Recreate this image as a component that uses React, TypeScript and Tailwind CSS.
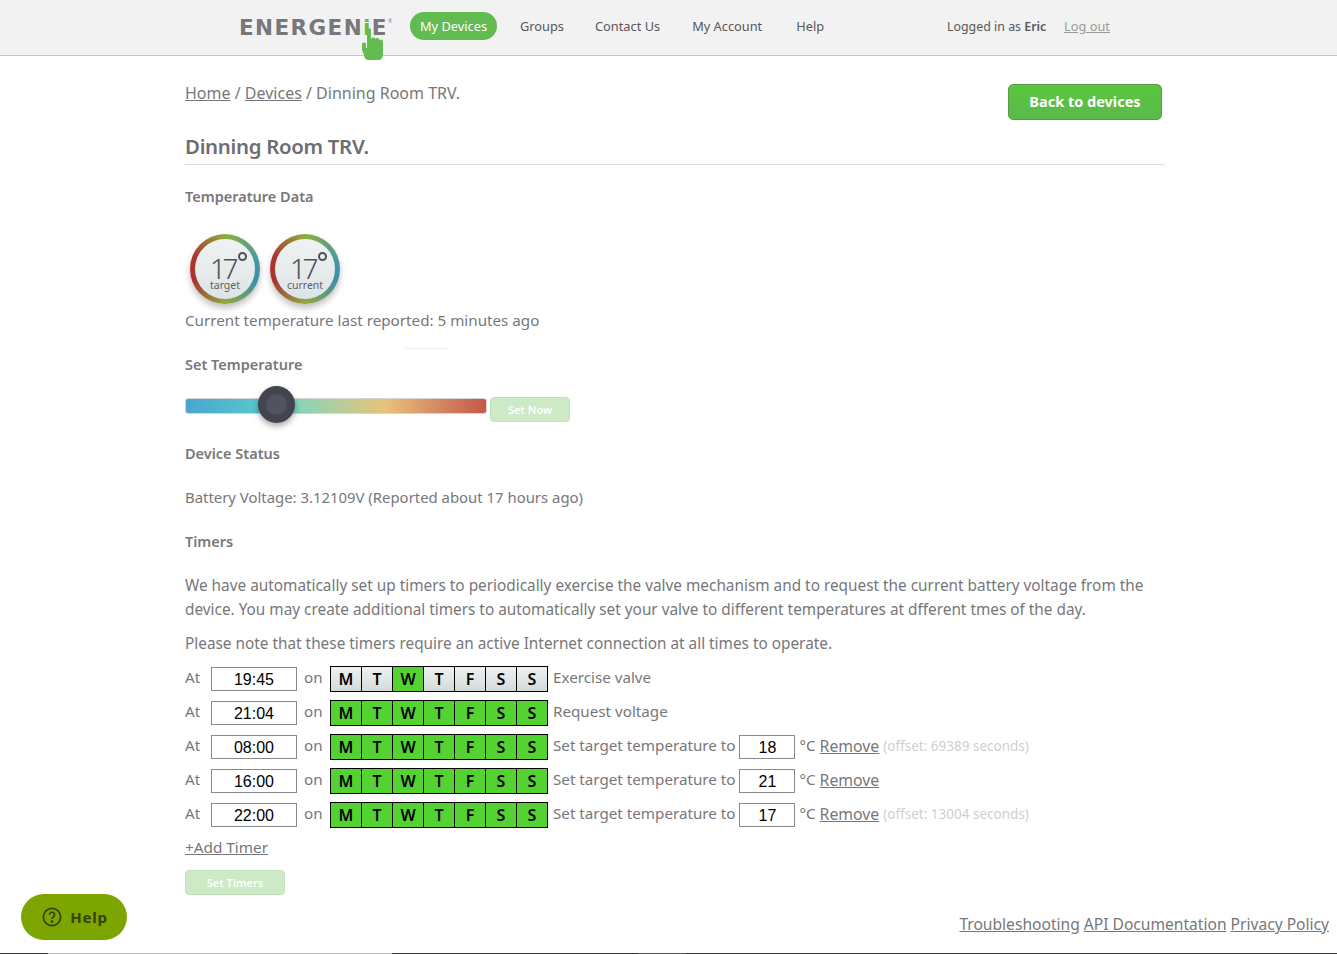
import React from "react";

const font = "font-['Noto_Sans','Open_Sans',sans-serif]";
const days = ["M", "T", "W", "T", "F", "S", "S"];

function Gauge({ label }: { label: string }) {
  return (
    <div className="relative w-[70px] h-[70px] rounded-full bg-[conic-gradient(from_0deg,#8fae3c_0deg,#4a9aa0_70deg,#3f8fa8_110deg,#8fa83c_180deg,#a8352f_250deg,#a8352f_290deg,#8fae3c_360deg)] shadow-[0_4px_6px_rgba(0,0,0,0.25)] flex items-center justify-center">
      <div className="relative w-[60px] h-[60px] rounded-full bg-gradient-to-b from-[#f0f2f2] to-[#dde4e6]">
        <span className="absolute left-[15px] top-[18px] text-[28px] leading-[22px] tracking-[-3.5px] font-light text-[#4e5157]">17</span>
        <span className="absolute left-[43px] top-[13px] w-[9px] h-[9px] rounded-full border-2 border-[#4e5157]" />
        <span className="absolute inset-x-0 top-[40px] text-center text-[10.5px] leading-[12px] text-[#5e6268]">{label}</span>
      </div>
    </div>
  );
}

function Timer({ time, active, label, temp, offset, remove }: { time: string; active: boolean[]; label: string; temp?: string; offset?: string; remove?: boolean }) {
  return (
    <div className="flex items-center h-[34px] text-[15.2px] text-[#77777a]">
      <span className="w-[26px]">At</span>
      <input readOnly value={time} className="w-[86px] h-[24px] border border-[#888] pt-[1px] text-center text-[16px] text-black font-['Liberation_Sans',sans-serif] mt-[4px]" />
      <span className="ml-[7px] w-[26px]">on</span>
      <div className="flex border border-black h-[26px] mr-[5px] bg-black gap-px ml-0 mt-[4px]">
        {days.map((d, i) => (
          <div key={i} className={`w-[30px] flex items-center justify-center text-[16px] font-semibold text-black ${active[i] ? "bg-[#53d232]" : "bg-gradient-to-b from-[#eff1f1] to-[#d3d9d9]"}`}>{d}</div>
        ))}
      </div>
      <span>{label}</span>
      {temp && (
        <>
          <input readOnly value={temp} className="ml-[4px] w-[56px] h-[24px] border border-[#888] pt-[1px] text-center text-[16px] text-black font-['Liberation_Sans',sans-serif] mt-[4px]" />
          <span className="ml-[4px]">°C</span>
        </>
      )}
      {remove && <a className="ml-[4px] underline text-[15.8px] mt-[3px]">Remove</a>}
      {offset && <span className="ml-[4px] text-[13.5px] text-[#cfcfcf] mt-[2px]">{offset}</span>}
    </div>
  );
}

export default function App() {
  const all = [true, true, true, true, true, true, true];
  return (
    <div className={`${font} relative h-[954px] overflow-hidden bg-white text-[#77777a]`}>
      <header className="relative h-[56px] bg-[#f2f2f2] border-b border-[#c6c6c6] flex items-center pl-[239px] pb-[1px] text-[12.8px] text-[#58585a]">
        <div className="relative w-[171px] h-[54px] flex items-center pt-[1px]">
          <span className="font-['DejaVu_Sans',sans-serif] font-bold text-[21.5px] tracking-[1.4px] text-[#77787b] leading-none">ENERGEN<span className="text-[#64bc50]">i</span>E</span>
          <span className="absolute left-[149px] top-[19px] text-[5px] leading-none text-[#888]">®</span>
          <svg className="absolute left-[122px] top-[28px]" width="23" height="33" viewBox="0 0 23 33">
            <path d="M1 16 C1 14 5 14 5 16 L5 20 L6 20 L6 2 C6 -0.5 10 -0.5 10 2 L10 11 C11 9 14 9 14.5 11 C15 9.5 18 9.5 18.5 12 C19 11 22 11 22 14 L22 26 C22 30 20 32 17 32 L8 32 C5 32 3 30 3 27 L1 22 Z" fill="#64bc50" />
          </svg>
        </div>
        <a className="h-[28px] w-[87px] rounded-full bg-[#62bb51] text-white flex items-center justify-center mb-[2px] pt-[1px]">My Devices</a>
        <a className="ml-[23px]">Groups</a>
        <a className="ml-[31px]">Contact Us</a>
        <a className="ml-[32px]">My Account</a>
        <a className="ml-[34px]">Help</a>
        <span className="absolute left-[947px] text-[12.4px]">Logged in as <b className="font-semibold">Eric</b></span>
        <a className="absolute left-[1064px] underline text-[#9a9a9a]">Log out</a>
      </header>

      <main className="relative w-[980px] ml-[185px]">
        <div className="flex justify-between items-start pt-[28px] h-[78px]">
          <div className="text-[16px] leading-[18px]"><a className="underline">Home</a> / <a className="underline">Devices</a> / Dinning Room TRV.</div>
          <a className="mr-[3px] w-[154px] h-[36px] rounded-[5px] bg-gradient-to-b from-[#58c83c] to-[#5cb84a] border border-[#5a9c45] text-white text-[14.5px] font-bold flex items-center justify-center pb-[1px]">Back to devices</a>
        </div>
        <h1 className="text-[20.4px] leading-[24px] font-semibold text-[#6d6e71] h-[31px] tracking-[-0.3px] border-b border-[#ddd]">Dinning Room TRV.</h1>
        <h2 className="mt-[21px] text-[14.5px] leading-[20px] font-semibold">Temperature Data</h2>
        <div className="flex gap-[10px] mt-[28px] ml-[5px]">
          <Gauge label="target" />
          <Gauge label="current" />
        </div>
        <p className="mt-[6px] text-[15.2px] leading-[20px]">Current temperature last reported: 5 minutes ago</p>
        <span className="absolute left-[220px] top-[292px] w-[43px] h-px bg-[#eeeeee]" />
        <h2 className="mt-[24px] text-[14.5px] leading-[20px] font-semibold">Set Temperature</h2>
        <div className="flex items-start mt-[12px] h-[37px]">
          <div className="relative w-[302px] h-[16px] mt-[12px] rounded-[3px] border border-[#d5d5d5] bg-[linear-gradient(90deg,#4aa5cf_0%,#58c6cb_24%,#82d6bb_36%,#e8c37a_66%,#c4574c_100%)]">
            <span className="absolute left-[72px] top-[-13px] w-[37px] h-[37px] rounded-full bg-[#42454f] shadow-[0_3px_6px_rgba(0,0,0,0.35)] flex items-center justify-center">
              <span className="w-[21px] h-[21px] rounded-full bg-[#50535c]" />
            </span>
          </div>
          <a className="ml-[3px] mt-[11px] w-[80px] h-[25px] rounded-[4px] bg-[#cdeac6] border border-[#c3e2bc] text-white text-[11px] font-semibold flex items-center justify-center pt-[1px]">Set Now</a>
        </div>
        <h2 className="mt-[20px] text-[14.5px] leading-[20px] font-semibold">Device Status</h2>
        <p className="mt-[24px] text-[14.9px] leading-[20px]">Battery Voltage: 3.12109V (Reported about 17 hours ago)</p>
        <h2 className="mt-[24px] text-[14.5px] leading-[20px] font-semibold">Timers</h2>
        <p className="mt-[22px] text-[15.35px] leading-[24px]">We have automatically set up timers to periodically exercise the valve mechanism and to request the current battery voltage from the device. You may create additional timers to automatically set your valve to different temperatures at dfferent tmes of the day.</p>
        <p className="mt-[10px] text-[15.35px] leading-[24px]">Please note that these timers require an active Internet connection at all times to operate.</p>
        <div className="mt-[5px]">
          <Timer time="19:45" active={[false, false, true, false, false, false, false]} label="Exercise valve" />
          <Timer time="21:04" active={all} label="Request voltage" />
          <Timer time="08:00" active={all} label="Set target temperature to" temp="18" remove offset="(offset: 69389 seconds)" />
          <Timer time="16:00" active={all} label="Set target temperature to" temp="21" remove />
          <Timer time="22:00" active={all} label="Set target temperature to" temp="17" remove offset="(offset: 13004 seconds)" />
        </div>
        <a className="block mt-[7px] text-[15.3px] leading-[20px] underline">+Add Timer</a>
        <a className="mt-[13px] w-[100px] h-[25px] rounded-[4px] bg-[#cdeac6] border border-[#c3e2bc] text-white text-[11px] font-semibold flex items-center justify-center pt-[1px]">Set Timers</a>
      </main>

      <a className="absolute left-[21px] top-[894px] w-[106px] h-[46px] rounded-full bg-[#7ca500] text-[#37400a] flex items-center justify-center gap-[8px] pl-[2px] text-[15px] font-bold tracking-[0.8px]">
        <svg width="20" height="20" viewBox="0 0 20 20" fill="none" stroke="currentColor" strokeWidth="1.7"><circle cx="10" cy="10" r="8.6" /><path d="M7.5 7.8a2.5 2.5 0 1 1 3.8 2.1c-.9.6-1.3 1-1.3 2" /><circle cx="10" cy="14.6" r=".6" fill="currentColor" /></svg>
        Help
      </a>
      <div className="absolute right-[8px] top-[914px] flex gap-[4px] text-[15.6px] leading-[20px]">
        <a className="underline">Troubleshooting</a>
        <a className="underline">API Documentation</a>
        <a className="underline">Privacy Policy</a>
      </div>
      <div className="absolute left-0 right-0 bottom-0 h-[1px] flex">
        <div className="w-[48px] bg-[#333]" />
        <div className="w-[344px] bg-[#bbb]" />
        <div className="w-[246px] bg-[#333]" />
        <div className="w-[48px] bg-[#555]" />
        <div className="flex-1 bg-[#333]" />
      </div>
    </div>
  );
}
